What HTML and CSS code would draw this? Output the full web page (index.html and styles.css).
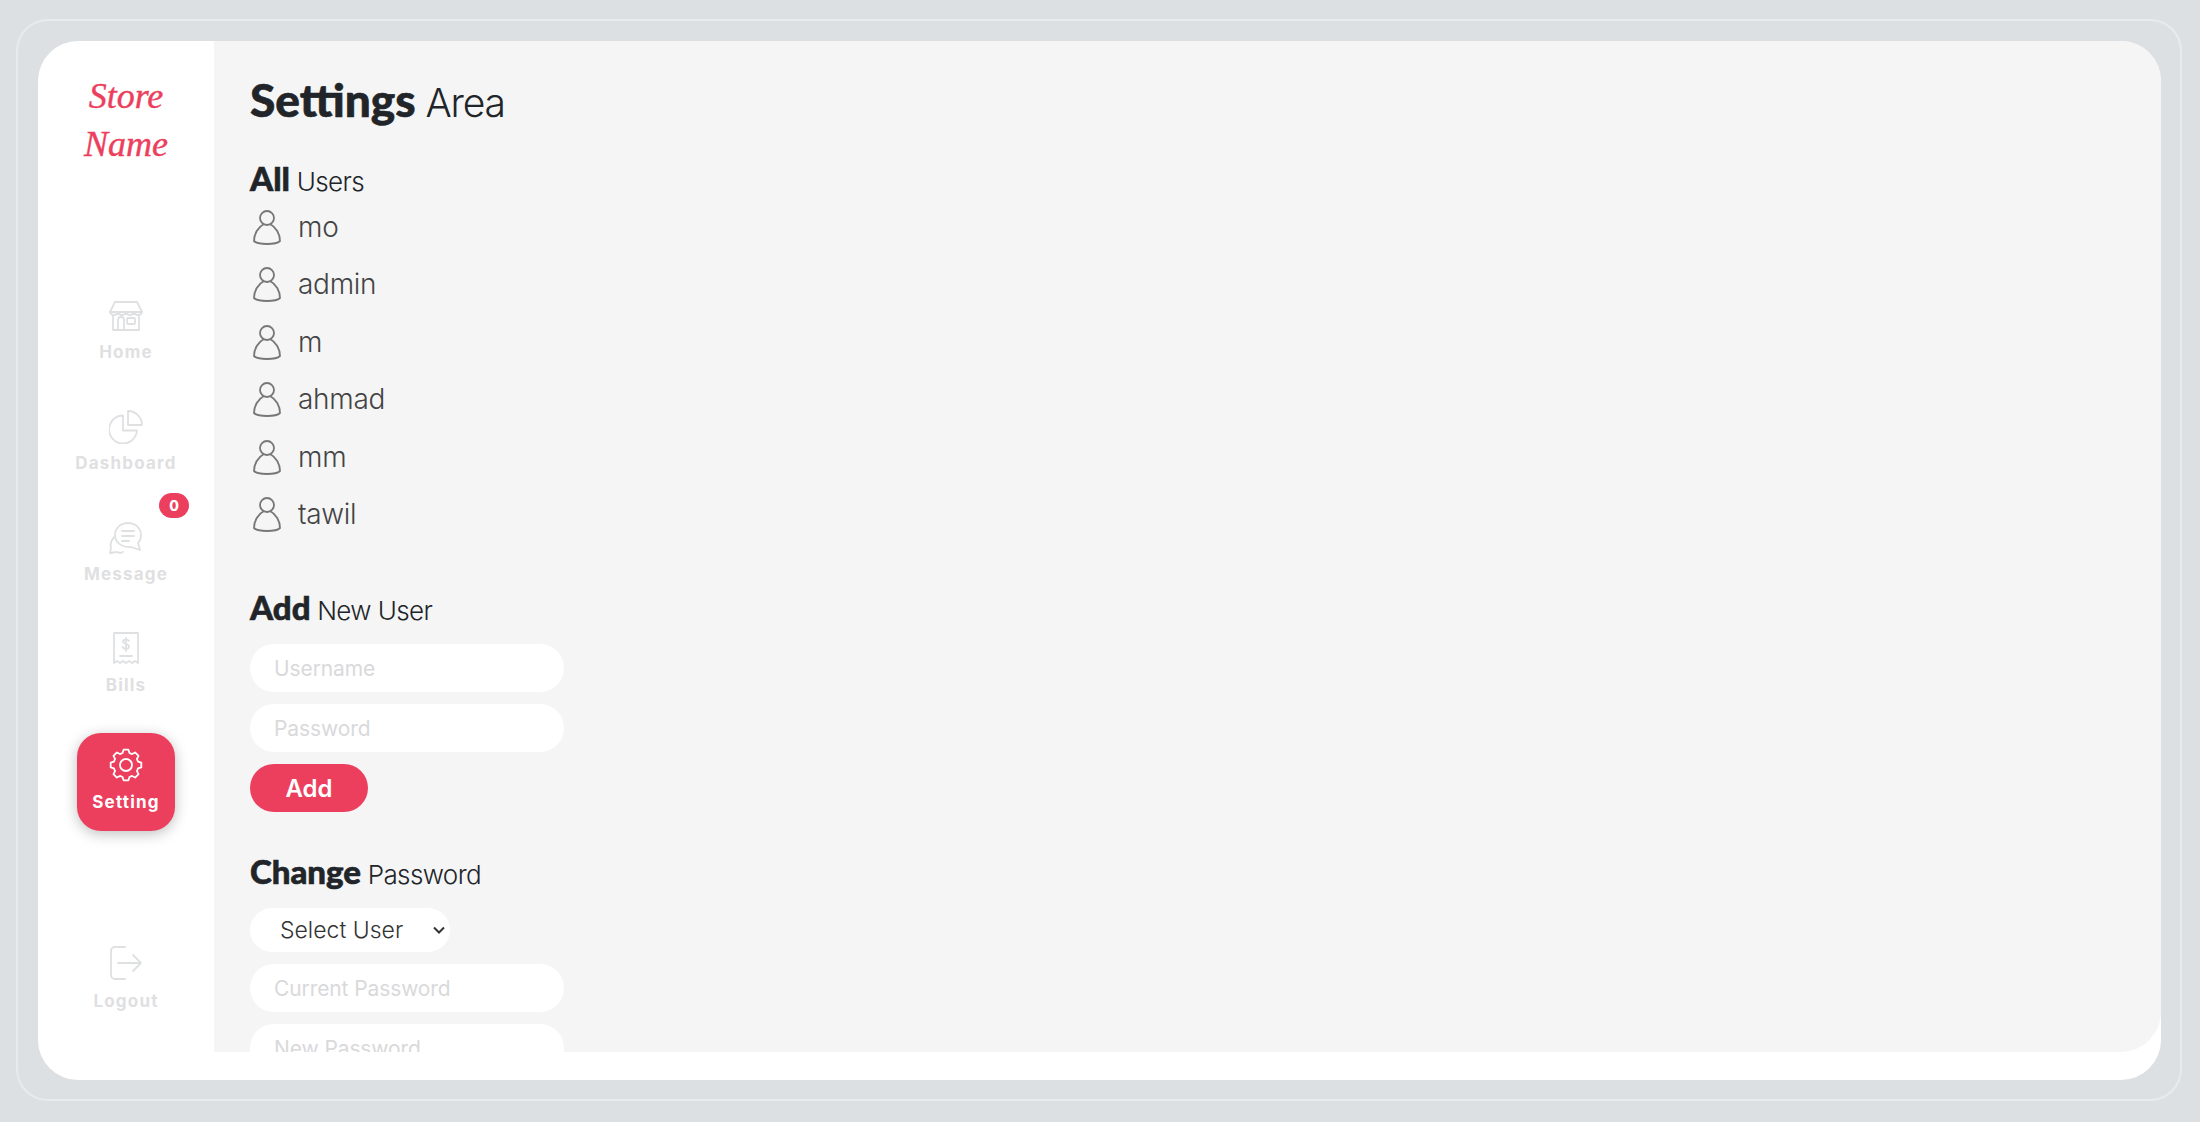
FILE: index.html
```html
<!DOCTYPE html>
<html lang="en">
<head>
  <meta charset="UTF-8">
  <title>Store Name - Settings</title>
  <link rel="stylesheet" href="styles.css">
</head>
<body>
  <div class="frame">
    <div class="shell">
      <aside class="sidebar">
        <div class="logo">Store<br>Name</div>

        <nav class="menu">
          <a class="item">
            <svg class="icon" viewBox="0 0 34 34"><path d="M6 3h22l5 10H1z"/><path d="M1 13c1 4 7 4 8 0 1 4 7 4 8 0 1 4 7 4 8 0 1 4 7 4 8 0"/><path d="M4 17v14h26V17"/><path d="M9 31V21a3 3 0 0 1 6 0v10"/><rect x="18" y="19" width="8" height="6" rx="1"/></svg>
            <span>Home</span>
          </a>
          <a class="item">
            <svg class="icon" viewBox="0 0 34 34"><path d="M14 5.500a14 14 0 1 0 14 15H14z"/><path d="M19 1a14 14 0 0 1 14 14H19z"/></svg>
            <span>Dashboard</span>
          </a>
          <a class="item">
            <span class="badge">0</span>
            <svg class="icon" viewBox="0 0 34 34"><path d="M19 2c7 0 13 5 13 12 0 3-1 6-3 8l2 7-9-3c-8 1-16-4-16-12C6 7 12 2 19 2z"/><path d="M5 16c-3 4-4 8-3 11l-1 5 7-1c2 1 4 1 6 0"/><path d="M13 10h12M13 15h12M13 20h7"/></svg>
            <span>Message</span>
          </a>
          <a class="item">
            <svg class="icon" viewBox="0 0 34 34"><path d="M5 1h24v30l-3-2-3 2-3-2-3 2-3-2-3 2-3-2-3 2z"/><path d="M11 24h12"/><path d="M20 9c-1-2-6-2-6 .5s6 2 6 5-5 3-6.500 .5M17 6v13"/></svg>
            <span>Bills</span>
          </a>
          <a class="item active">
            <svg class="icon" viewBox="0 0 34 34"><circle cx="17" cy="17" r="6"/><polygon points="13.55,4.98 14.58,1.69 19.42,1.69 20.45,4.98 23.06,6.07 26.11,4.46 29.54,7.89 27.93,10.94 29.02,13.55 32.31,14.58 32.31,19.42 29.02,20.45 27.93,23.06 29.54,26.11 26.11,29.54 23.06,27.93 20.45,29.02 19.42,32.31 14.58,32.31 13.55,29.02 10.94,27.93 7.89,29.54 4.46,26.11 6.07,23.06 4.98,20.45 1.69,19.42 1.69,14.58 4.98,13.55 6.07,10.94 4.46,7.89 7.89,4.46 10.94,6.07"/></svg>
            <span>Setting</span>
          </a>
        </nav>

        <a class="item logout">
          <svg class="icon" viewBox="0 0 34 34"><path d="M16 1H6a4 4 0 0 0-4 4v24a4 4 0 0 0 4 4h10"/><path d="M9 17h23M24 9l8 8-8 8"/></svg>
          <span>Logout</span>
        </a>
      </aside>

      <main class="content">
        <h1 class="title"><b>Settings</b> Area</h1>

        <h2 class="sub users-head"><b>All</b> Users</h2>
        <ul class="users">
          <li><svg viewBox="0 0 30 36"><circle cx="15" cy="9" r="7"/><path d="M12 15C6 18 2 25 2 32c4 4 22 4 26 0 0-7-4-14-10-17"/></svg>mo</li>
          <li><svg viewBox="0 0 30 36"><circle cx="15" cy="9" r="7"/><path d="M12 15C6 18 2 25 2 32c4 4 22 4 26 0 0-7-4-14-10-17"/></svg>admin</li>
          <li><svg viewBox="0 0 30 36"><circle cx="15" cy="9" r="7"/><path d="M12 15C6 18 2 25 2 32c4 4 22 4 26 0 0-7-4-14-10-17"/></svg>m</li>
          <li><svg viewBox="0 0 30 36"><circle cx="15" cy="9" r="7"/><path d="M12 15C6 18 2 25 2 32c4 4 22 4 26 0 0-7-4-14-10-17"/></svg>ahmad</li>
          <li><svg viewBox="0 0 30 36"><circle cx="15" cy="9" r="7"/><path d="M12 15C6 18 2 25 2 32c4 4 22 4 26 0 0-7-4-14-10-17"/></svg>mm</li>
          <li><svg viewBox="0 0 30 36"><circle cx="15" cy="9" r="7"/><path d="M12 15C6 18 2 25 2 32c4 4 22 4 26 0 0-7-4-14-10-17"/></svg>tawil</li>
        </ul>

        <h2 class="sub add-head"><b>Add</b> New User</h2>
        <form class="form">
          <input class="field" type="text" placeholder="Username">
          <input class="field" type="password" placeholder="Password">
          <button class="btn" type="button">Add</button>
        </form>

        <h2 class="sub change-head"><b>Change</b> Password</h2>
        <form class="form">
          <div class="picker-wrap">
            <select class="picker">
              <option>Select User</option>
            </select>
            <svg class="chevron" viewBox="0 0 14 10"><path d="M2 2.500l5 5 5-5"/></svg>
          </div>
          <input class="field" type="password" placeholder="Current Password">
          <input class="field" type="password" placeholder="New Password">
        </form>
      </main>
    </div>
  </div>
</body>
</html>
```

FILE: styles.css
```css
* {
  box-sizing: border-box;
}
html, body {
  height: 100%;
}
body {
  margin: 0;
  padding: 19px 18px 21px 16px;
  background: #dce0e3;
  font-family: Inter, "Liberation Sans", sans-serif;
  color: #212529;
}
.frame {
  height: 100%;
  padding: 20px 19px 19px 20px;
  border: 2px solid #e8ebee;
  border-radius: 32px;
}
.shell {
  display: flex;
  height: 100%;
  background: white;
  border-radius: 40px;
  overflow: hidden;
}

.sidebar {
  display: flex;
  flex-direction: column;
  align-items: center;
  flex: 0 0 176px;
  padding: 31px 0 51px;
}
.logo {
  height: 210px;
  font-family: "Liberation Serif", serif;
  font-style: italic;
  font-size: 36px;
  line-height: 48px;
  text-align: center;
  color: #ec3f5e;
  -webkit-text-stroke: 0.4px #ec3f5e;
}
.menu {
  display: flex;
  flex-direction: column;
  gap: 13px;
}
.item {
  position: relative;
  display: flex;
  flex-direction: column;
  align-items: center;
  width: 98px;
  height: 98px;
  padding-top: 17px;
  border-radius: 24px;
  color: #dfe0e2;
  font-size: 17px;
  font-weight: 700;
  letter-spacing: 1.2px;
}
.item span {
  margin-top: 7px;
  line-height: 24px;
}
.icon {
  width: 34px;
  height: 34px;
  fill: none;
  stroke: #dfe0e2;
  stroke-width: 1.800;
  stroke-linejoin: round;
  stroke-linecap: round;
}
.item.active {
  margin-top: 7px;
  padding-top: 15px;
  background: #ec3f5e;
  color: white;
  box-shadow: 0 3px 14px rgba(0,0,0,0.25);
}
.item.active span {
  margin-top: 8px;
}
.item.active .icon {
  stroke: white;
}
.item .badge {
  position: absolute;
  top: -11px;
  right: -14px;
  width: 30px;
  height: 25px;
  margin: 0;
  border-radius: 13px;
  background: #ec3f5e;
  color: white;
  font-size: 14px;
  font-weight: 800;
  line-height: 25px;
  letter-spacing: 0;
  text-align: center;
}
.logout {
  margin-top: auto;
  padding-top: 15px;
}
.logout span {
  margin-top: 9px;
}

.content {
  flex: 1;
  margin-bottom: 28px;
  padding: 31px 36px;
  background: #f5f5f5;
  border-radius: 0 40px 40px 0;
  overflow: hidden;
}
.title, .sub {
  margin: 0;
  font-weight: 300;
}
.title b, .sub b {
  font-family: Lato, sans-serif;
  font-weight: 900;
  letter-spacing: 0;
  -webkit-text-stroke: 0.6px #212529;
}
.title {
  font-size: 39px;
  line-height: 56px;
  letter-spacing: -1.2px;
}
.title b {
  font-size: 46px;
}
.sub {
  font-size: 26px;
  line-height: 36px;
  letter-spacing: -0.6px;
}
.sub b {
  font-size: 33px;
}
.users-head {
  margin-top: 29px;
}
.users {
  margin: 0;
  padding: 0;
  list-style: none;
}
.users li {
  display: flex;
  align-items: center;
  gap: 16px;
  height: 57.500px;
  font-size: 28px;
  font-weight: 300;
  letter-spacing: -0.3px;
  color: #444;
}
.users svg {
  width: 30px;
  height: 36px;
  margin-left: 2px;
  fill: none;
  stroke: #777;
  stroke-width: 1.800;
}
.users li:first-child {
  margin-top: -2px;
}
.add-head {
  margin-top: 46px;
}
.change-head {
  margin-top: 41px;
}
.form {
  display: flex;
  flex-direction: column;
  align-items: flex-start;
  gap: 12px;
  margin-top: 15px;
}
.field {
  width: 314px;
  height: 48px;
  padding: 0 24px;
  border: none;
  border-radius: 24px;
  background: white;
  font-family: Inter, sans-serif;
  font-size: 21px;
  letter-spacing: -0.1px;
}
.field::placeholder {
  color: #d9d9db;
}
.btn {
  width: 118px;
  height: 48px;
  border: none;
  border-radius: 24px;
  background: #ec3f5e;
  color: white;
  font-family: Inter, sans-serif;
  font-size: 24px;
  font-weight: 600;
}
.picker-wrap {
  position: relative;
  width: 200px;
  height: 44px;
}
.picker {
  appearance: none;
  width: 100%;
  height: 100%;
  padding-left: 30px;
  border: none;
  border-radius: 22px;
  background: white;
  color: #333;
  font-family: Inter, sans-serif;
  font-size: 23px;
  font-weight: 300;
}
.chevron {
  position: absolute;
  top: 17px;
  right: 4px;
  width: 14px;
  height: 10px;
  fill: none;
  stroke: #333;
  stroke-width: 2;
}
```
